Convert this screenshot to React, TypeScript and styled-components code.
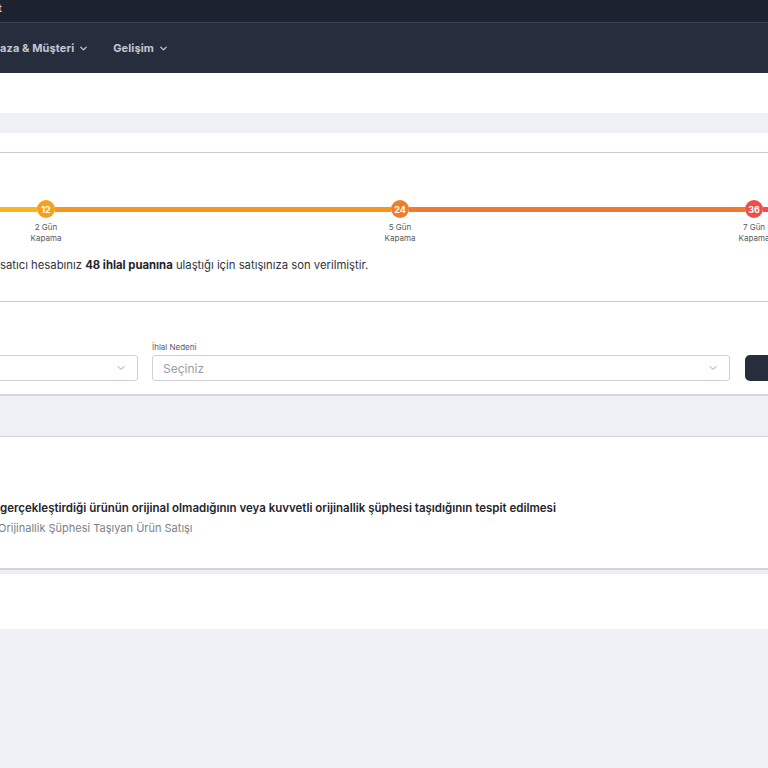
import { createGlobalStyle, styled } from "styled-components";
import { ChevronDown } from "lucide-react";

const GlobalStyle = createGlobalStyle`
	html, body {
		margin: 0;
		padding: 0;
		background: #eff0f5;
		overflow: hidden;
	}
	body {
		font-family: Inter, "Noto Sans", "Liberation Sans", sans-serif;
		color: #2b2f38;
	}
`;

const Shell = styled.div`
	width: 768px;
	min-height: 768px;
	overflow: hidden;
	background: #eff0f5;
`;

const TopBar = styled.div`
	height: 22px;
	background: #1c2230;
	border-bottom: 1px solid #3a4252;
	display: flex;
	align-items: center;
	color: #c7ccd6;
	font-size: 11px;
	font-weight: 600;
`;

const TopBarText = styled.span`
	margin-left: -2px;
	margin-top: -6px;
`;

const NavBar = styled.nav`
	height: 50px;
	background: #262e3e;
	display: flex;
	align-items: center;
	gap: 24px;
`;

const NavItem = styled.div`
	display: flex;
	align-items: center;
	gap: 4px;
	color: #c3c8d3;
	font-size: 11px;
	font-weight: 700;
	letter-spacing: 0.1px;
`;

const WhiteBand = styled.div<{ $h: number }>`
	height: ${({ $h }) => $h}px;
	background: #ffffff;
`;

const GrayGap = styled.div<{ $h: number }>`
	height: ${({ $h }) => $h}px;
`;

const Card = styled.section`
	background: #ffffff;
`;

const CardHead = styled.div`
	height: 19px;
	border-bottom: 1px solid #c9cad4;
`;

const TimelineBody = styled.div`
	padding: 47px 0 0;
	height: 101px;
	border-bottom: 1px solid #c9cad4;
`;

const Track = styled.div`
	display: flex;
	align-items: flex-start;
	width: 768px;
`;

const Segment = styled.div<{ $color: string; $w?: number }>`
	height: 5px;
	margin-top: 7px;
	background: ${({ $color }) => $color};
	${({ $w }) => ($w ? `width: ${$w}px; flex: none;` : "flex: 1;")}
`;

const Marker = styled.div`
	width: 18px;
	flex: none;
	display: flex;
	flex-direction: column;
	align-items: center;
`;

const Dot = styled.div<{ $color: string }>`
	width: 18px;
	height: 18px;
	border-radius: 50%;
	background: ${({ $color }) => $color};
	color: #ffffff;
	font-size: 9px;
	font-weight: 700;
	display: flex;
	align-items: center;
	justify-content: center;
`;

const MarkerLabel = styled.div`
	margin-top: 4px;
	font-size: 8px;
	line-height: 11px;
	color: #555a63;
	text-align: center;
	white-space: nowrap;
`;

const Notice = styled.p`
	margin: 13px 0 0;
	font-size: 11.3px;
	line-height: 16px;
	color: #30343c;
	white-space: nowrap;

	b {
		font-weight: 700;
		color: #1f232b;
	}
`;

const FilterBody = styled.div`
	height: 94px;
	box-sizing: border-box;
	border-bottom: 2px solid #d6d7dd;
	display: flex;
	align-items: flex-end;
	padding-bottom: 13px;
`;

const FilterRow = styled.div`
	display: flex;
	align-items: flex-end;
	gap: 14px;
	margin-left: -12px;
`;

const Field = styled.div<{ $w: number }>`
	width: ${({ $w }) => $w}px;
	flex: none;
	display: flex;
	flex-direction: column;
`;

const FieldLabel = styled.label`
	font-size: 8px;
	line-height: 10px;
	color: #555a63;
	margin-bottom: 3px;
`;

const Select = styled.div`
	height: 26px;
	box-sizing: border-box;
	border: 1px solid #cfd1d6;
	border-radius: 3px;
	display: flex;
	align-items: center;
	justify-content: space-between;
	padding: 0 10px;
	color: #9a9ea6;
	font-size: 12px;
`;

const SearchButton = styled.button`
	width: 80px;
	height: 26px;
	margin-left: 1px;
	border: none;
	border-radius: 5px;
	background: #262e3e;
	flex: none;
`;

const ViolationCard = styled.section`
	background: #ffffff;
	border-top: 1px solid #d3d4da;
	border-bottom: 2px solid #d3d4da;
	box-sizing: border-box;
	height: 134px;
	padding-top: 63px;
`;

const ViolationTitle = styled.div`
	font-size: 11.5px;
	line-height: 16px;
	font-weight: 600;
	color: #23262d;
	white-space: nowrap;
`;

const ViolationType = styled.div`
	font-size: 11px;
	line-height: 16px;
	margin-top: 4px;
	color: #7b7f87;
	white-space: nowrap;
	text-indent: -2px;
`;

const Footer = styled.div`
	height: 55px;
	background: #ffffff;
	border-top: 1px solid #eceef2;
	margin-top: 3px;
`;

export default function App() {
	return (
		<>
			<GlobalStyle />
			<Shell>
				<TopBar>
					<TopBarText>t</TopBarText>
				</TopBar>
				<NavBar>
					<NavItem>
						aza &amp; Müşteri <ChevronDown size={11} strokeWidth={3} />
					</NavItem>
					<NavItem>
						Gelişim <ChevronDown size={11} strokeWidth={3} />
					</NavItem>
				</NavBar>
				<WhiteBand $h={40} />
				<GrayGap $h={20} />
				<Card>
					<CardHead />
					<TimelineBody>
						<Track>
							<Segment $color="#f9b51e" $w={37} />
							<Marker>
								<Dot $color="#f7a01c">12</Dot>
								<MarkerLabel>
									2 Gün
									<br />
									Kapama
								</MarkerLabel>
							</Marker>
							<Segment $color="#f7951d" />
							<Marker>
								<Dot $color="#f07d2a">24</Dot>
								<MarkerLabel>
									5 Gün
									<br />
									Kapama
								</MarkerLabel>
							</Marker>
							<Segment $color="#ee7b2b" />
							<Marker>
								<Dot $color="#ef4f4c">36</Dot>
								<MarkerLabel>
									7 Gün
									<br />
									Kapama
								</MarkerLabel>
							</Marker>
							<Segment $color="#ef4f4c" $w={5} />
						</Track>
						<Notice>
							satıcı hesabınız <b>48 ihlal puanına</b> ulaştığı için satışınıza son verilmiştir.
						</Notice>
					</TimelineBody>
					<FilterBody>
						<FilterRow>
							<Field $w={150}>
								<Select>
									<span />
									<ChevronDown size={12} color="#9a9ea6" />
								</Select>
							</Field>
							<Field $w={578}>
								<FieldLabel>İhlal Nedeni</FieldLabel>
								<Select>
									<span>Seçiniz</span>
									<ChevronDown size={12} color="#9a9ea6" />
								</Select>
							</Field>
							<SearchButton />
						</FilterRow>
					</FilterBody>
				</Card>
				<GrayGap $h={40} />
				<ViolationCard>
					<ViolationTitle>
						gerçekleştirdiği ürünün orijinal olmadığının veya kuvvetli orijinallik şüphesi taşıdığının tespit edilmesi
					</ViolationTitle>
					<ViolationType>Orijinallik Şüphesi Taşıyan Ürün Satışı</ViolationType>
				</ViolationCard>
				<Footer />
			</Shell>
		</>
	);
}
